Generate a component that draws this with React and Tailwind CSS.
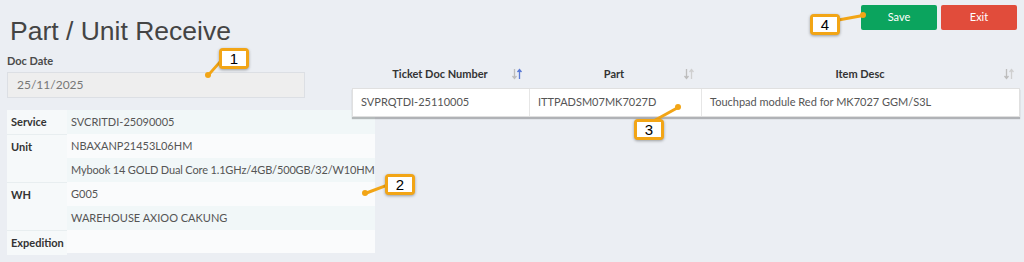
import React from 'react';

const SortIcon = ({ active }) => (
    <svg width="12" height="12" viewBox="0 0 12 12" className="shrink-0">
        <path d="M3.5 1v9M1.5 8l2 2.5 2-2.5" stroke="#bdbdbd" strokeWidth="1.3" fill="none" />
        <path d="M8.5 11V2M6.5 4l2-2.5 2 2.5" stroke={active ? '#5b7bd5' : '#cfcfcf'} strokeWidth="1.3" fill={active ? '#5b7bd5' : 'none'} />
    </svg>
);

const Callout = ({ n, box, dot }) => {
    // box: [left, top], dot: [x, y]
    const bx = box[0] + 4;
    const by = box[1] + 10;
    const len = Math.hypot(bx - dot[0], by - dot[1]);
    const ang = (Math.atan2(by - dot[1], bx - dot[0]) * 180) / Math.PI;
    return (
        <>
            <div
                className="absolute h-[3px] bg-[#f2a516] rounded-full origin-left"
                style={{ left: dot[0], top: dot[1] - 1, width: len, transform: `rotate(${ang}deg)` }}
            />
            <div className="absolute w-[6px] h-[6px] rounded-full bg-[#f2a516]" style={{ left: dot[0] - 3, top: dot[1] - 3 }} />
            <div
                className="absolute w-[30px] h-[21px] rounded-[4px] bg-[#f2a516] p-[3px] shadow-[0_1px_3px_rgba(0,0,0,0.35)]"
                style={{ left: box[0], top: box[1] }}
            >
                <div className="w-full h-full bg-white flex items-center justify-center text-[15px] leading-none text-black font-['Liberation_Sans',sans-serif]">
                    {n}
                </div>
            </div>
        </>
    );
};

const infoRows = [
    { label: 'Service', value: 'SVCRITDI-25090005', span: 1 },
    { label: 'Unit', value: 'NBAXANP21453L06HM', span: 2 },
    { label: '', value: 'Mybook 14 GOLD Dual Core 1.1GHz/4GB/500GB/32/W10HM', tight: true },
    { label: 'WH', value: 'G005', span: 2 },
    { label: '', value: 'WAREHOUSE AXIOO CAKUNG' },
    { label: 'Expedition', value: '', span: 1 },
];

const App = () => {
    return (
        <div className="relative w-[1024px] h-[262px] bg-[#ebeef3] overflow-hidden font-['Lato',sans-serif] text-[#444]">
            <div className="flex">
                {/* left */}
                <div className="w-[345px] shrink-0 ml-[7px]">
                    <h1 className="text-[26.5px] leading-none mt-[18px] ml-[3px] text-[#444] font-['Liberation_Sans',sans-serif]">
                        Part / Unit Receive
                    </h1>
                    <div className="text-[11px] font-bold mt-[8px] text-[#4a4a4a]">Doc Date</div>
                    <div className="w-[298px] h-[26px] mt-[3px] bg-[#eeeeee] border border-[#dcdfe4] flex items-center px-[9px] text-[12px] text-[#777]">
                        25/11/2025
                    </div>
                    <div className="w-[368px] mt-[12px] grid grid-cols-[60px_minmax(0,1fr)] text-[11px]">
                        {infoRows.map((r, i) => (
                            <React.Fragment key={i}>
                                {r.span && (
                                    <div
                                        className={`font-bold text-[#333] px-[4px] bg-[#f6f9fa] ${i > 0 ? 'border-t border-[#e8eef0]' : ''}`}
                                        style={{ gridRow: `span ${r.span}` }}
                                    >
                                        <div className="h-[24px] flex items-center">{r.label}</div>
                                    </div>
                                )}
                                <div
                                    className={`flex items-center px-[4px] whitespace-nowrap text-[#555] ${r.tight ? 'tracking-[-0.15px]' : ''} ${i % 2 === 0 ? 'bg-[#f1f7f8]' : 'bg-[#fafbfc]'} ${i === 5 ? 'h-[23px]' : 'h-[24px]'}`}
                                >
                                    {r.value}
                                </div>
                            </React.Fragment>
                        ))}
                    </div>
                </div>

                {/* right */}
                <div className="flex-1 mr-[4px] flex flex-col items-end">
                    <div className="flex gap-[4px] mt-[5px] mr-[3px]">
                        <button className="w-[76px] h-[25px] rounded-[2px] bg-[#0ba45e] text-white text-[11px]">Save</button>
                        <button className="w-[76px] h-[25px] rounded-[2px] bg-[#e14c3b] text-white text-[11px]">Exit</button>
                    </div>
                    <div className="w-full mt-[30px] text-[11px]">
                        <div className="grid grid-cols-[176px_172px_1fr] h-[28px] font-bold text-[#333]">
                            {[
                                ['Ticket Doc Number', true],
                                ['Part', false],
                                ['Item Desc', false],
                            ].map(([h, a]) => (
                                <div key={h} className="relative flex items-center justify-center">
                                    <span>{h}</span>
                                    <div className="absolute right-[5px] top-[8px]">
                                        <SortIcon active={a} />
                                    </div>
                                </div>
                            ))}
                        </div>
                        <div className="grid grid-cols-[176px_172px_1fr] h-[29px] bg-white border border-[#e0e0e0] shadow-[0_2px_1px_rgba(0,0,0,0.25)] text-[#555]">
                            <div className="flex items-center px-[8px]">SVPRQTDI-25110005</div>
                            <div className="flex items-center px-[8px] border-l border-[#e6e6e6]">ITTPADSM07MK7027D</div>
                            <div className="flex items-center px-[8px] border-l border-[#e6e6e6]">Touchpad module Red for MK7027 GGM/S3L</div>
                        </div>
                    </div>
                </div>
            </div>

            <Callout n="1" box={[219, 48]} dot={[208, 75]} />
            <Callout n="2" box={[385, 174]} dot={[365, 193]} />
            <Callout n="3" box={[634, 119]} dot={[678, 107]} />
            <Callout n="4" box={[810, 14]} dot={[863, 15]} />
        </div>
    );
};

export default App;
